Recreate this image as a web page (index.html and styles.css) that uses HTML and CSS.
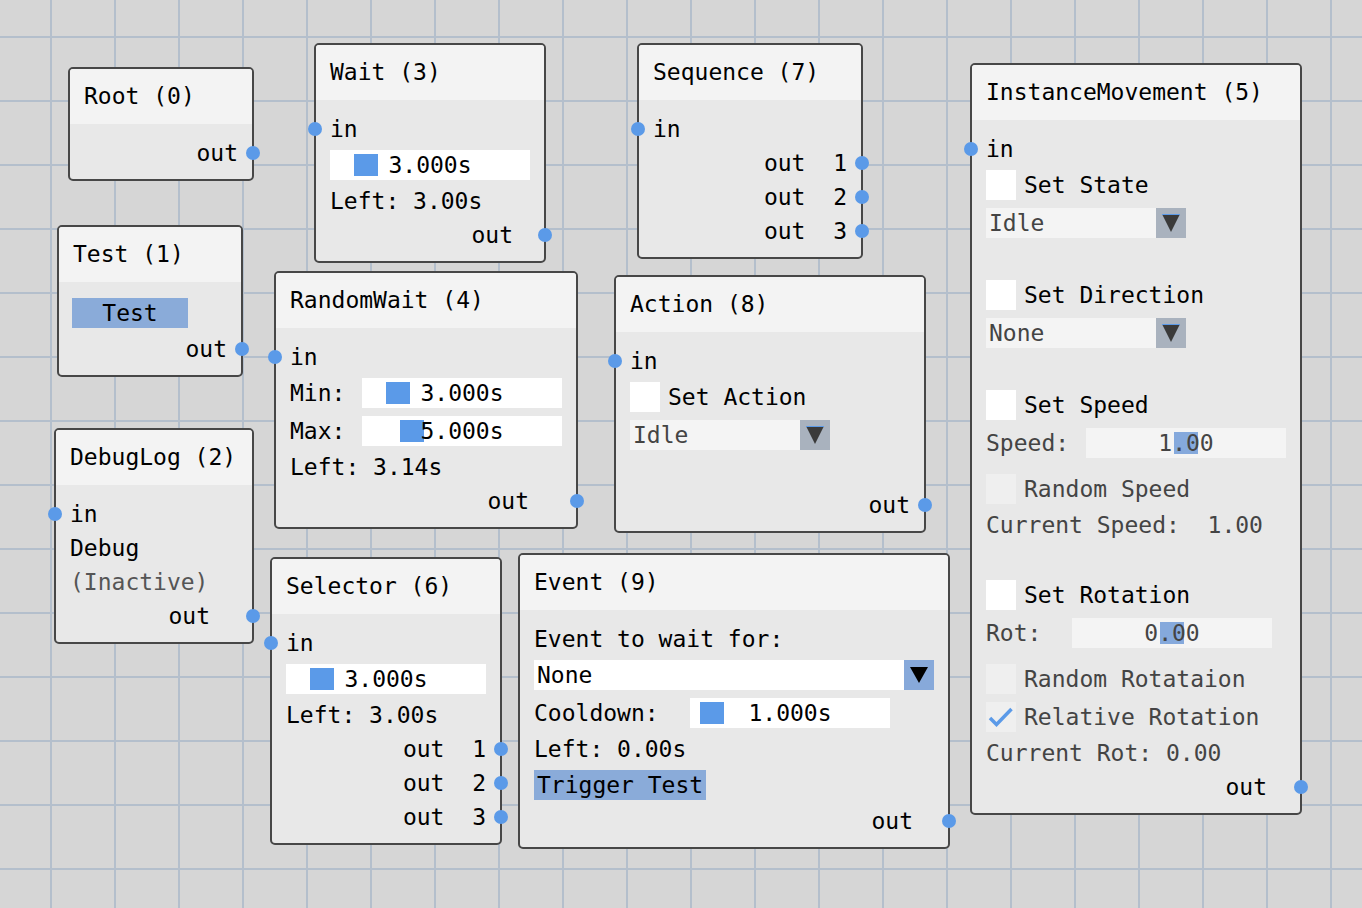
FILE: index.html
```html
<!DOCTYPE html>
<html>
<head>
<meta charset="utf-8">
<link rel="stylesheet" href="styles.css">
</head>
<body>
<div class="canvas">

  <div class="node n-root">
    <div class="node-title">Root (0)</div>
    <div class="node-body">
      <div class="row out">out<span class="port port-out"></span></div>
    </div>
  </div>

  <div class="node n-test">
    <div class="node-title">Test (1)</div>
    <div class="node-body">
      <div class="row"><div class="btn btn-test">Test</div></div>
      <div class="row out">out<span class="port port-out"></span></div>
    </div>
  </div>

  <div class="node n-debug">
    <div class="node-title">DebugLog (2)</div>
    <div class="node-body">
      <div class="row"><span class="port port-in"></span>in</div>
      <div class="row">Debug</div>
      <div class="row inactive">(Inactive)</div>
      <div class="row out pr-debug">out<span class="port port-out"></span></div>
    </div>
  </div>

  <div class="node n-wait">
    <div class="node-title">Wait (3)</div>
    <div class="node-body">
      <div class="row"><span class="port port-in"></span>in</div>
      <div class="row"><div class="slider"><span class="grab" style="left:24px"></span><span class="slider-text">3.000s</span></div></div>
      <div class="row">Left: 3.00s</div>
      <div class="row out pr-wait">out<span class="port port-out"></span></div>
    </div>
  </div>

  <div class="node n-randwait">
    <div class="node-title">RandomWait (4)</div>
    <div class="node-body">
      <div class="row"><span class="port port-in"></span>in</div>
      <div class="row"><span class="lbl lbl-min">Min:</span><div class="slider"><span class="grab" style="left:24px"></span><span class="slider-text">3.000s</span></div></div>
      <div class="row"><span class="lbl lbl-min">Max:</span><div class="slider"><span class="grab" style="left:38px"></span><span class="slider-text">5.000s</span></div></div>
      <div class="row">Left: 3.14s</div>
      <div class="row out pr-randwait">out<span class="port port-out"></span></div>
    </div>
  </div>

  <div class="node n-inst">
    <div class="node-title">InstanceMovement (5)</div>
    <div class="node-body">
      <div class="row"><span class="port port-in"></span>in</div>
      <div class="row"><span class="check"></span>Set State</div>
      <div class="row">
        <div class="combo"><span class="combo-val dis">Idle</span><span class="combo-btn dis"><svg width="30" height="30" viewBox="0 0 30 30"><polygon points="6,6 24,6 15,24" fill="#3a3a3a"/><line x1="6" y1="6.5" x2="24" y2="6.5" stroke="#5b9ae8" stroke-width="1"/></svg></span></div>
      </div>
      <div class="row blank"></div>
      <div class="row"><span class="check"></span>Set Direction</div>
      <div class="row">
        <div class="combo"><span class="combo-val dis">None</span><span class="combo-btn dis"><svg width="30" height="30" viewBox="0 0 30 30"><polygon points="6,6 24,6 15,24" fill="#3a3a3a"/><line x1="6" y1="6.5" x2="24" y2="6.5" stroke="#5b9ae8" stroke-width="1"/></svg></span></div>
      </div>
      <div class="row blank"></div>
      <div class="row"><span class="check"></span>Set Speed</div>
      <div class="row disabled"><span class="lbl lbl-speed">Speed:</span><div class="slider slider-dis"><span class="grab grab-dis" style="left:88px"></span><span class="slider-text">1.00</span></div></div>
      <div class="row disabled mt8"><span class="check check-dis"></span>Random Speed</div>
      <div class="row disabled">Current Speed:  1.00</div>
      <div class="row blank"></div>
      <div class="row"><span class="check"></span>Set Rotation</div>
      <div class="row disabled"><span class="lbl lbl-rot">Rot:</span><div class="slider slider-dis"><span class="grab grab-dis" style="left:88px"></span><span class="slider-text">0.00</span></div></div>
      <div class="row disabled mt8"><span class="check check-dis"></span>Random Rotataion</div>
      <div class="row disabled"><span class="check check-dis"><svg width="30" height="30" viewBox="0 0 30 30"><path d="M4 16 L10.5 22.5 L25.5 7" stroke="#5b9ae8" stroke-width="3.5" fill="none"/></svg></span>Relative Rotation</div>
      <div class="row disabled">Current Rot: 0.00</div>
      <div class="row out pr-inst">out<span class="port port-out"></span></div>
    </div>
  </div>

  <div class="node n-selector">
    <div class="node-title">Selector (6)</div>
    <div class="node-body">
      <div class="row"><span class="port port-in"></span>in</div>
      <div class="row"><div class="slider"><span class="grab" style="left:24px"></span><span class="slider-text">3.000s</span></div></div>
      <div class="row">Left: 3.00s</div>
      <div class="row out">out  1<span class="port port-out"></span></div>
      <div class="row out">out  2<span class="port port-out"></span></div>
      <div class="row out">out  3<span class="port port-out"></span></div>
    </div>
  </div>

  <div class="node n-seq">
    <div class="node-title">Sequence (7)</div>
    <div class="node-body">
      <div class="row"><span class="port port-in"></span>in</div>
      <div class="row out">out  1<span class="port port-out"></span></div>
      <div class="row out">out  2<span class="port port-out"></span></div>
      <div class="row out">out  3<span class="port port-out"></span></div>
    </div>
  </div>

  <div class="node n-action">
    <div class="node-title">Action (8)</div>
    <div class="node-body">
      <div class="row"><span class="port port-in"></span>in</div>
      <div class="row"><span class="check"></span>Set Action</div>
      <div class="row">
        <div class="combo"><span class="combo-val dis">Idle</span><span class="combo-btn dis"><svg width="30" height="30" viewBox="0 0 30 30"><polygon points="6,6 24,6 15,24" fill="#3a3a3a"/><line x1="6" y1="6.5" x2="24" y2="6.5" stroke="#5b9ae8" stroke-width="1"/></svg></span></div>
      </div>
      <div class="row blank"></div>
      <div class="row out">out<span class="port port-out"></span></div>
    </div>
  </div>

  <div class="node n-event">
    <div class="node-title">Event (9)</div>
    <div class="node-body">
      <div class="row">Event to wait for:</div>
      <div class="row">
        <div class="combo combo-wide"><span class="combo-val">None</span><span class="combo-btn active"><svg width="30" height="30" viewBox="0 0 30 30"><polygon points="6,7 24,7 15,23" fill="#000"/></svg></span></div>
      </div>
      <div class="row"><span class="lbl lbl-cool">Cooldown:</span><div class="slider"><span class="grab" style="left:10px"></span><span class="slider-text">1.000s</span></div></div>
      <div class="row">Left: 0.00s</div>
      <div class="row"><div class="btn btn-trigger">Trigger Test</div></div>
      <div class="row out pr-event">out<span class="port port-out"></span></div>
    </div>
  </div>

</div>
</body>
</html>
```

FILE: styles.css
```css
html, body {
  margin: 0;
  padding: 0;
}

.canvas {
  position: relative;
  width: 1362px;
  height: 908px;
  overflow: hidden;
  background-color: #d6d6d6;
  background-image:
    linear-gradient(to right, #b4bfcc 2px, transparent 2px),
    linear-gradient(to bottom, #b4bfcc 2px, transparent 2px);
  background-size: 64px 64px;
  background-position: 50px 36px;
}

.node {
  position: absolute;
  box-sizing: border-box;
  border: 2px solid #474747;
  border-radius: 5px;
  background: #e8e8e8;
  font-family: "DejaVu Sans Mono", monospace;
  font-size: 23px;
  line-height: 26px;
  color: #000;
}

.node-title {
  background: #f3f3f3;
  padding: 14px 14px 15px;
  border-radius: 3px 3px 0 0;
  white-space: pre;
}

.node-body {
  display: flex;
  flex-direction: column;
  gap: 8px;
  padding: 16px 0 13px;
}

.row {
  position: relative;
  display: flex;
  align-items: center;
  min-height: 26px;
  padding: 0 14px;
  white-space: pre;
}

.row.out {
  justify-content: flex-end;
}

.row.blank {
  height: 26px;
}

.row.disabled {
  color: #444;
}

.row.inactive {
  color: #555;
}

.mt8 {
  margin-top: 8px;
}

.pr-wait { padding-right: 31px; }
.pr-debug { padding-right: 42px; }
.pr-event { padding-right: 35px; }
.pr-inst { padding-right: 33px; }
.pr-randwait { padding-right: 47px; }

.port {
  position: absolute;
  top: 50%;
  width: 14px;
  height: 14px;
  margin-top: -7px;
  border-radius: 50%;
  background: #5b9ae8;
}

.port-in { left: -8px; }
.port-out { right: -8px; }

/* node placement on the canvas */
.n-root { left: 68px; top: 67px; width: 186px; }
.n-test { left: 57px; top: 225px; width: 186px; }
.n-debug { left: 54px; top: 428px; width: 200px; }
.n-wait { left: 314px; top: 43px; width: 232px; }
.n-seq { left: 637px; top: 43px; width: 226px; }
.n-randwait { left: 274px; top: 271px; width: 304px; }
.n-action { left: 614px; top: 275px; width: 312px; }
.n-selector { left: 270px; top: 557px; width: 232px; }
.n-event { left: 518px; top: 553px; width: 432px; }
.n-inst { left: 970px; top: 63px; width: 332px; }

/* widgets */
.slider {
  position: relative;
  width: 200px;
  height: 30px;
  background: #fff;
  text-align: center;
  line-height: 30px;
  flex: none;
}

.slider-dis {
  background: #f4f4f4;
}

.grab {
  position: absolute;
  top: 4px;
  width: 24px;
  height: 22px;
  background: #5b9ae8;
}

.grab-dis {
  background: #85a9dc;
}

.slider-text {
  position: relative;
}

.lbl { flex: none; }
.lbl-min { width: 72px; }
.lbl-cool { width: 156px; }
.lbl-speed { width: 100px; }
.lbl-rot { width: 86px; }

.check {
  flex: none;
  width: 30px;
  height: 30px;
  margin-right: 8px;
  background: #fff;
}

.check-dis {
  background: #efefef;
}

.check svg {
  display: block;
}

.combo {
  display: flex;
  width: 200px;
  height: 30px;
  flex: none;
}

.combo-wide {
  width: 400px;
}

.combo-val {
  flex: 1;
  background: #fff;
  padding-left: 3px;
  line-height: 30px;
}

.combo-val.dis {
  background: #f4f4f4;
  color: #444;
}

.combo-btn {
  width: 30px;
  height: 30px;
  flex: none;
}

.combo-btn svg {
  display: block;
}

.combo-btn.dis {
  background: #a9b2be;
}

.combo-btn.active {
  background: #87a9da;
}

.btn {
  height: 30px;
  line-height: 30px;
  background: #8aabd9;
  text-align: center;
}

.btn-test {
  width: 116px;
  margin-left: -1px;
}

.btn-trigger {
  padding: 0 3px;
}
```
